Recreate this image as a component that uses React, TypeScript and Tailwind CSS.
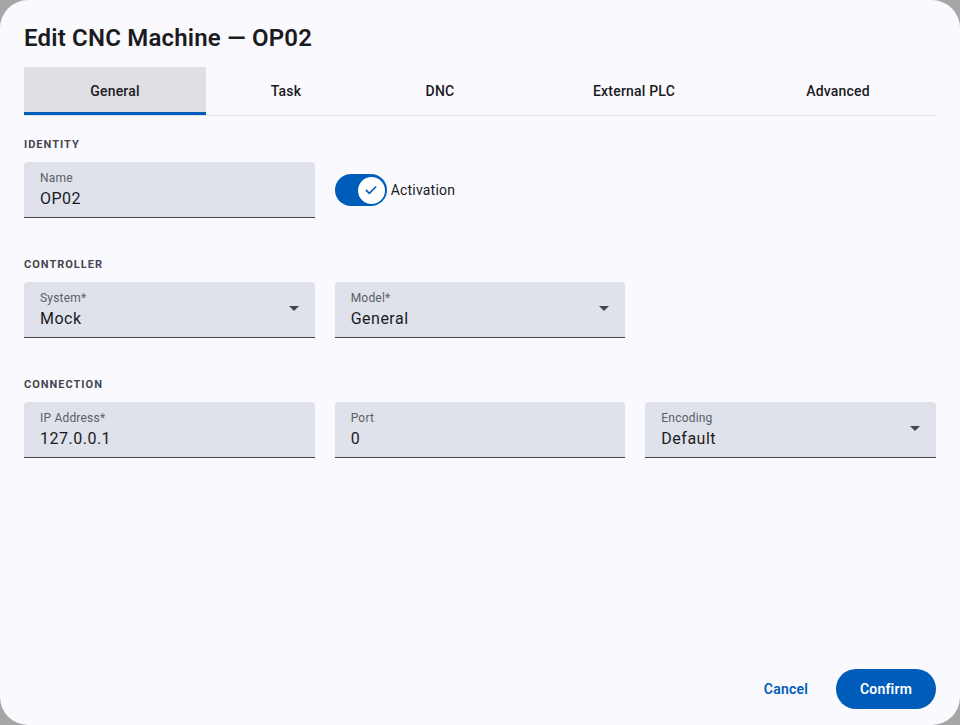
import React from "react";

const font = { fontFamily: 'Roboto, "Noto Sans", sans-serif' };

function Field({ label, value, select }: { label: string; value: string; select?: boolean }) {
  return (
    <div className="relative h-[56px] rounded-t-[4px] bg-[#dfe2ea] border-b border-[#44464f] px-4 pt-[8px]">
      <div className="text-[12px] leading-[16px] text-[#5b5e66] tracking-[0.2px]">{label}</div>
      <div className="text-[16px] leading-[24px] text-[#1b1b1f] mt-[1px] tracking-[0.5px]">{value}</div>
      {select && (
        <svg className="absolute right-[16px] top-[24px]" width="10" height="5" viewBox="0 0 10 5">
          <path d="M0 0 L10 0 L5 5 Z" fill="#44464f" />
        </svg>
      )}
    </div>
  );
}

function Section({ title }: { title: string }) {
  return (
    <div className="pt-px text-[11px] leading-[16px] font-bold tracking-[1px] text-[#44464f]">{title}</div>
  );
}

export default function App() {
  const tabs = [
    { name: "General", w: "w-[182px]" },
    { name: "Task", w: "w-[160px]" },
    { name: "DNC", w: "w-[148px]" },
    { name: "External PLC", w: "w-[240px]" },
    { name: "Advanced", w: "w-[168px]" },
  ];
  return (
    <div className="w-[960px] h-[725px] bg-[#a6a6a6]" style={font}>
      <div className="w-full h-full bg-[#f9f9fe] rounded-[28px] flex flex-col px-6">
        <h1 className="text-[24px] leading-[32px] font-semibold text-[#1b1b1f] mt-[22px] tracking-[0.2px]">
          Edit CNC Machine — OP02
        </h1>
        <div className="mt-[13px] flex border-b border-[#dfe0e6]">
          {tabs.map((t, i) => (
            <div
              key={t.name}
              className={`${t.w} h-[48px] flex items-center justify-center text-[14px] font-medium text-[#1b1b1f] tracking-[0.2px] ${
                i === 0 ? "bg-[#dfdfe4] border-b-[3px] border-[#005cb9] pt-[3px] -mb-px" : ""
              }`}
            >
              {t.name}
            </div>
          ))}
        </div>

        <div className="mt-[20px]">
          <Section title="IDENTITY" />
          <div className="mt-[9px] grid grid-cols-3 gap-5">
            <Field label="Name" value="OP02" />
            <div className="flex items-center gap-1">
              <div className="w-[52px] h-[32px] rounded-full bg-[#005cb9] flex items-center justify-end pr-[2px]">
                <div className="w-[27px] h-[27px] rounded-full bg-white flex items-center justify-center">
                  <svg width="16" height="16" viewBox="0 0 24 24">
                    <path d="M5 12.5l4.5 4.5L19 7.5" stroke="#005cb9" strokeWidth="2.4" fill="none" strokeLinecap="round" strokeLinejoin="round" />
                  </svg>
                </div>
              </div>
              <span className="text-[14px] text-[#1b1b1f] tracking-[0.2px]">Activation</span>
            </div>
          </div>
        </div>

        <div className="mt-[38px]">
          <Section title="CONTROLLER" />
          <div className="mt-[9px] grid grid-cols-3 gap-5">
            <Field label="System*" value="Mock" select />
            <Field label="Model*" value="General" select />
          </div>
        </div>

        <div className="mt-[38px]">
          <Section title="CONNECTION" />
          <div className="mt-[9px] grid grid-cols-3 gap-5">
            <Field label="IP Address*" value="127.0.0.1" />
            <Field label="Port" value="0" />
            <Field label="Encoding" value="Default" select />
          </div>
        </div>

        <div className="mt-auto mb-[16px] flex justify-end items-center gap-4">
          <button className="h-[40px] px-3 text-[14px] font-semibold text-[#005cb9] tracking-[0.2px]">Cancel</button>
          <button className="h-[40px] w-[100px] rounded-full bg-[#005cb9] text-white text-[14px] font-semibold tracking-[0.2px]">
            Confirm
          </button>
        </div>
      </div>
    </div>
  );
}
